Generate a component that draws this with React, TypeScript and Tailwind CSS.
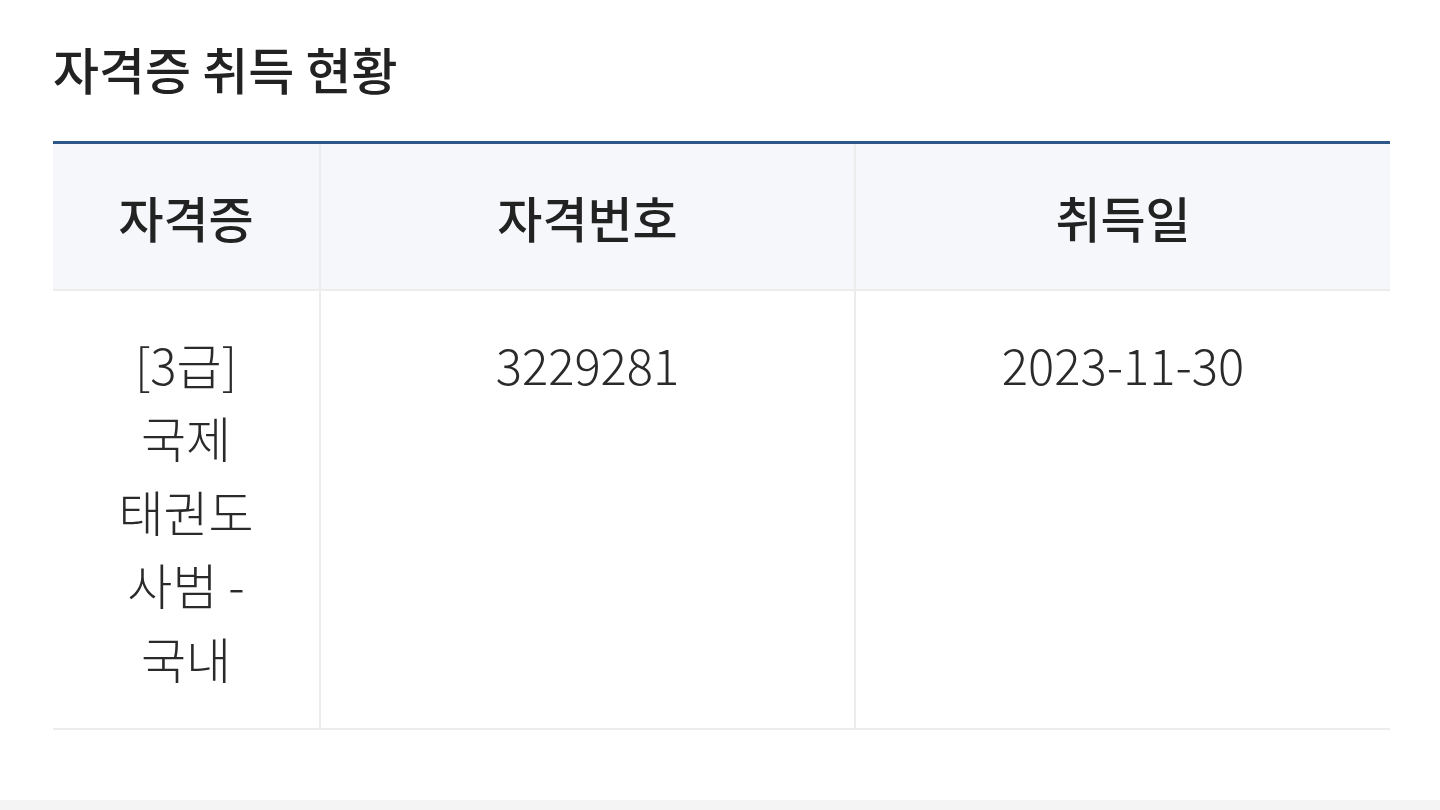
import React from "react";

const rows = [
  { name: "[3급] 국제 태권도 사범 - 국내", no: "3229281", date: "2023-11-30" },
];

export default function App() {
  return (
    <div className="min-h-[810px] bg-white" style={{ fontFamily: '"Noto Sans CJK KR", "Noto Sans", sans-serif' }}>
      <section className="h-[800px] pl-[53px] pr-[50px] pt-[34px]">
        <h2 className="text-[50px] leading-[68px] font-medium text-[#222]">자격증 취득 현황</h2>

        <table className="mt-[39px] w-full border-collapse table-fixed text-center">
          <colgroup>
            <col className="w-[267px]" />
            <col className="w-[535px]" />
            <col />
          </colgroup>
          <thead>
            <tr className="border-t-[3px] border-[#2d5689] bg-[#f5f7fa]">
              <th className="h-[147px] border-b-2 border-r-2 border-[#ececec] text-[49px] font-medium text-[#222]">자격증</th>
              <th className="border-b-2 border-r-2 border-[#ececec] text-[49px] font-medium text-[#222]">자격번호</th>
              <th className="border-b-2 border-[#ececec] text-[49px] font-medium text-[#222]">취득일</th>
            </tr>
          </thead>
          <tbody>
            {rows.map((r) => (
              <tr key={r.no} className="border-b-2 border-[#ececec] align-top text-[49px] font-light leading-[73.5px] text-[#2a2a2a]">
                <td className="border-r-2 border-[#ececec] px-[40px] pt-[36px] pb-[34px] break-keep">{r.name}</td>
                <td className="border-r-2 border-[#ececec] px-6 pt-[36px]">{r.no}</td>
                <td className="px-6 pt-[36px]">{r.date}</td>
              </tr>
            ))}
          </tbody>
        </table>
      </section>
      <div className="h-[10px] bg-[#f4f4f4]" />
    </div>
  );
}
